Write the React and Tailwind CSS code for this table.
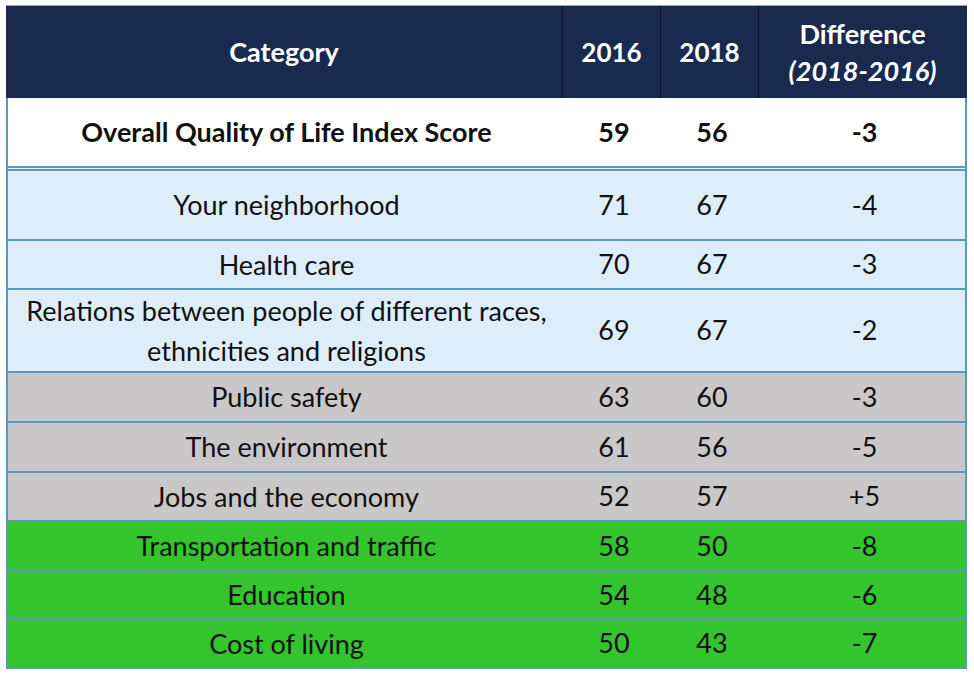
import React from "react";

const rows = [
  { name: "Your neighborhood", a: "71", b: "67", d: "-4", bg: "bg-[#ddeefa]", h: "h-[70px]" },
  { name: "Health care", a: "70", b: "67", d: "-3", bg: "bg-[#ddeefa]", h: "h-[49px]" },
  {
    name: "Relations between people of different races,\nethnicities and religions",
    a: "69",
    b: "67",
    d: "-2",
    bg: "bg-[#ddeefa]",
    h: "h-[83px]",
  },
  { name: "Public safety", a: "63", b: "60", d: "-3", bg: "bg-[#c9c7c8]", h: "h-[50px]" },
  { name: "The environment", a: "61", b: "56", d: "-5", bg: "bg-[#c9c7c8]", h: "h-[50px]" },
  { name: "Jobs and the economy", a: "52", b: "57", d: "+5", bg: "bg-[#c9c7c8]", h: "h-[49px]" },
  { name: "Transportation and traffic", a: "58", b: "50", d: "-8", bg: "bg-[#33c42e]", h: "h-[50px]" },
  { name: "Education", a: "54", b: "48", d: "-6", bg: "bg-[#33c42e]", h: "h-[48px]" },
  { name: "Cost of living", a: "50", b: "43", d: "-7", bg: "bg-[#33c42e]", h: "h-[51px]" },
];

const cols = "grid grid-cols-[557px_98px_98px_207px]";

export default function App() {
  return (
    <div
      className="w-[974px] h-[678px] bg-white pt-[5px] pl-[6px] text-[#111]"
      style={{ fontFamily: "Lato, 'Open Sans', sans-serif" }}
    >
      <div className="w-[961px]">
        {/* header */}
        <div className={`${cols} h-[93px] bg-[#1a2a4f] text-white font-bold text-[27px] border-t border-[#9aa3b3]`}>
          <div className="flex items-center justify-center border-r border-[#0b1226]">Category</div>
          <div className="flex items-center justify-center border-r border-[#0b1226] text-[26px]">2016</div>
          <div className="flex items-center justify-center border-r border-[#0b1226] text-[26px]">2018</div>
          <div className="flex flex-col items-center justify-center leading-[37px]">
            <span>Difference</span>
            <span className="italic">(2018-2016)</span>
          </div>
        </div>

        {/* overall */}
        <div className="border-x-2 border-[#5a99b8]">
          <div className={`${cols} h-[70px] bg-white font-bold text-[27px] border-b-2 border-[#5a99b8]`}>
            <div className="flex items-center justify-center">Overall Quality of Life Index Score</div>
            <div className="flex items-center justify-center">59</div>
            <div className="flex items-center justify-center">56</div>
            <div className="flex items-center justify-center">-3</div>
          </div>
          <div className="h-[1px] bg-[#e6f2fa]" />

          {rows.map((r, i) => (
            <div
              key={i}
              className={`${cols} ${r.h} ${r.bg} text-[27px] border-t-2 border-[#5a99b8] ${i === rows.length - 1 ? "border-b-2" : ""}`}
            >
              <div className="flex items-center justify-center text-center whitespace-pre-line leading-[40px]">
                {r.name}
              </div>
              <div className="flex items-center justify-center">{r.a}</div>
              <div className="flex items-center justify-center">{r.b}</div>
              <div className="flex items-center justify-center">{r.d}</div>
            </div>
          ))}
        </div>
      </div>
    </div>
  );
}
